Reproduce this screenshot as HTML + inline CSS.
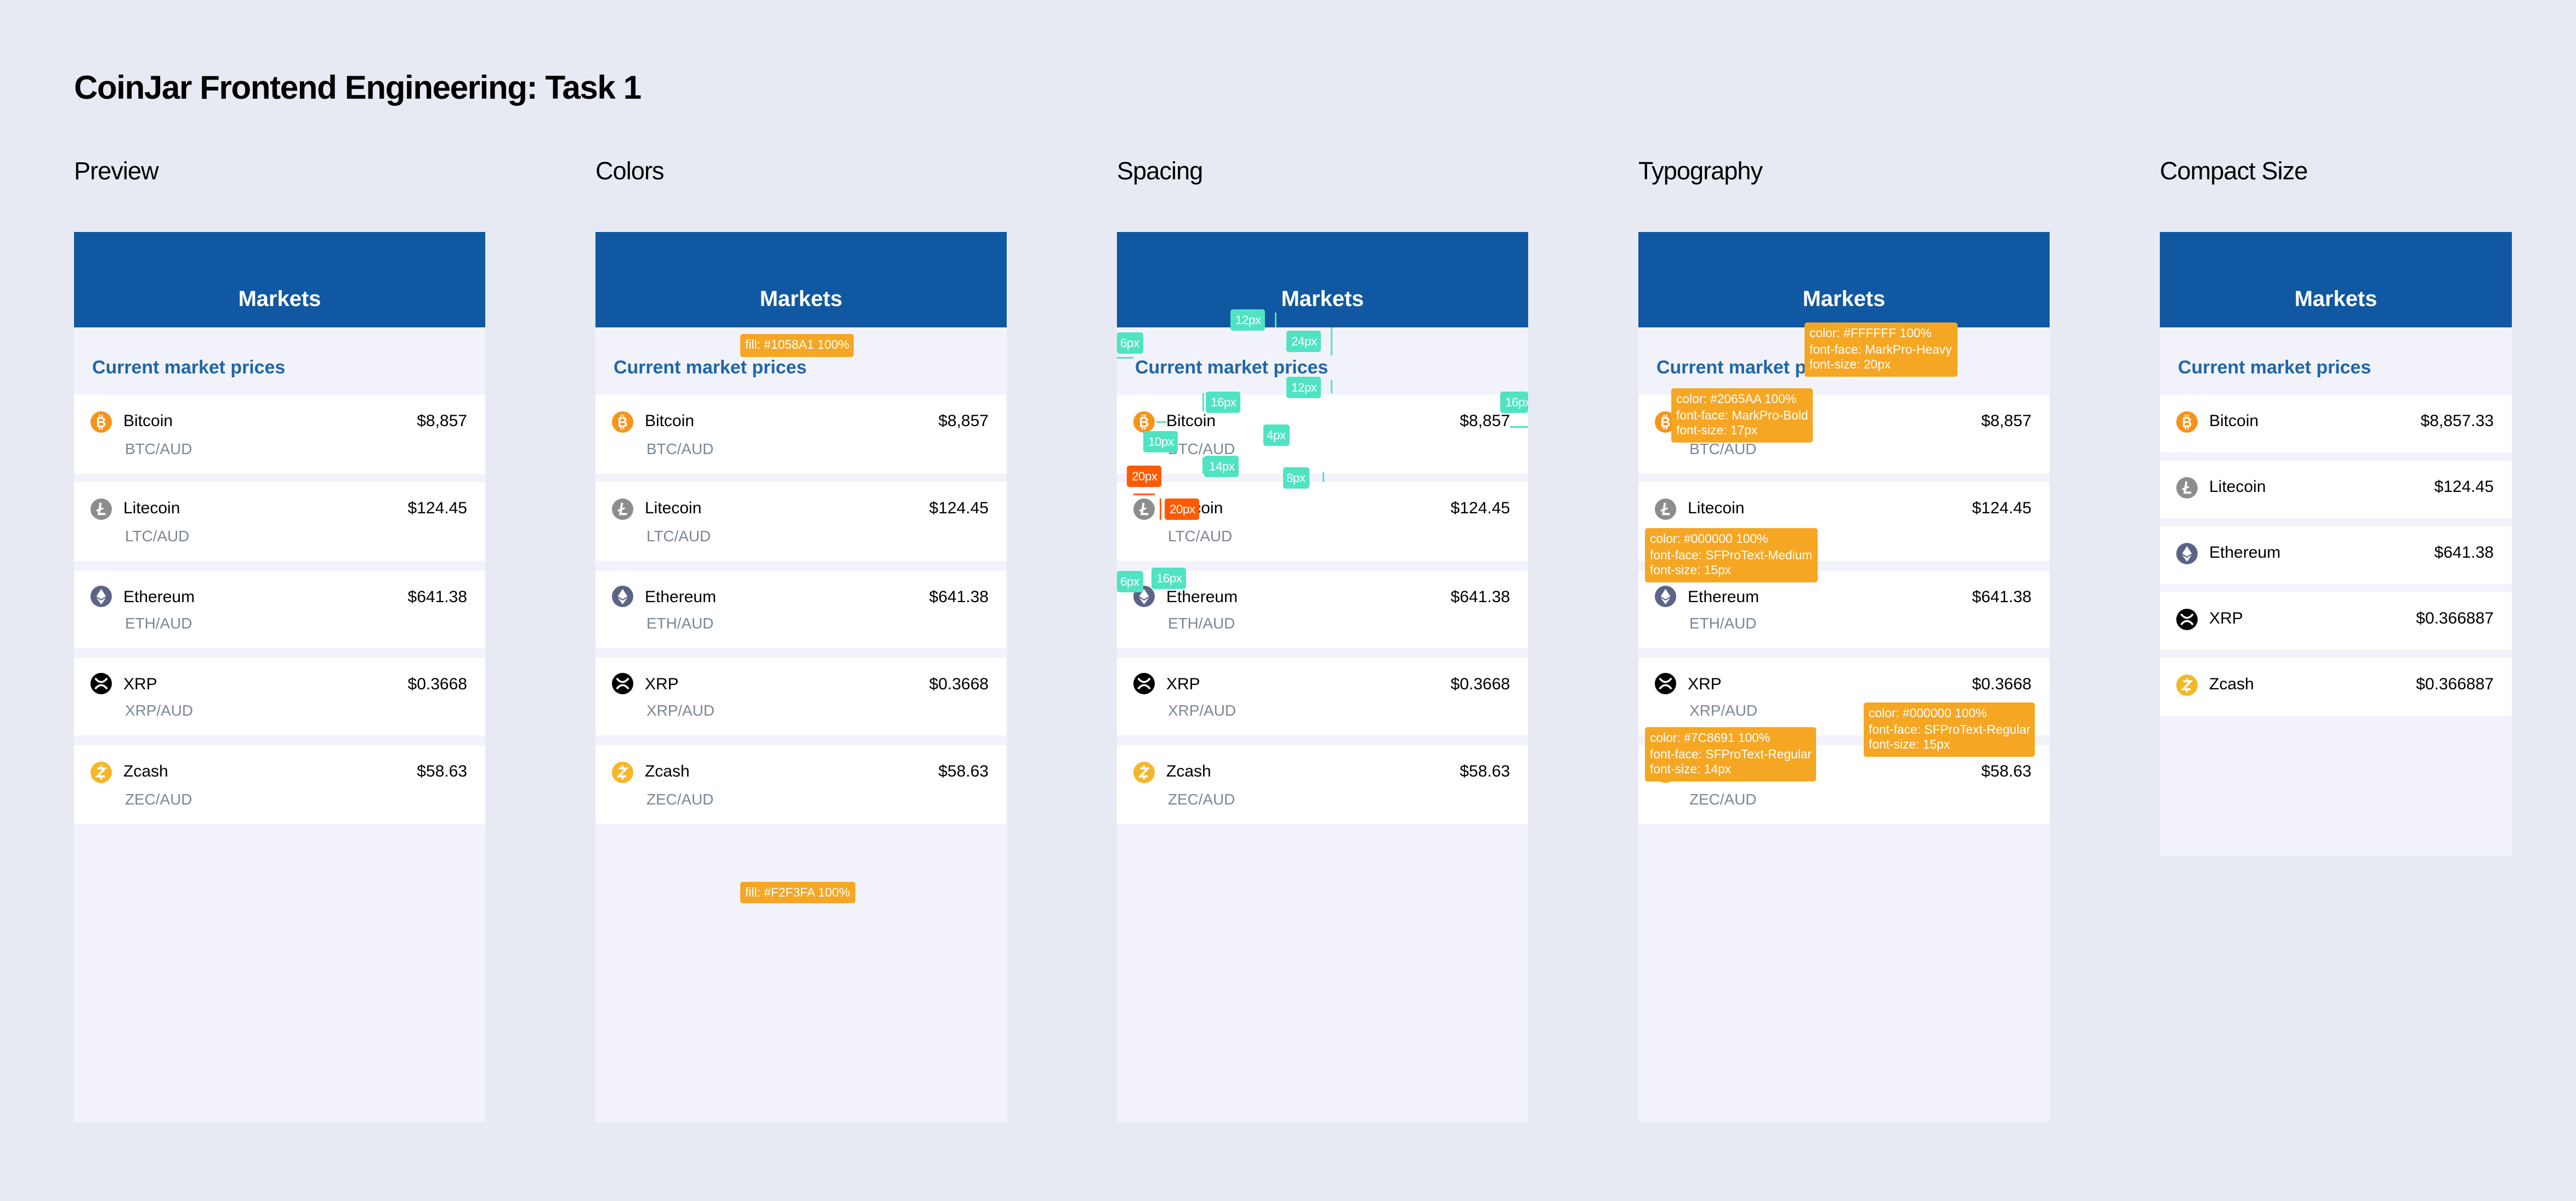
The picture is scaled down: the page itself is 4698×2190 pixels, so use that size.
<!DOCTYPE html>
<html><head><meta charset="utf-8"><style>
html,body{margin:0;padding:0;background:#E8EAF3;}
body{width:4698px;height:2188px;overflow:hidden;position:relative;}
#w{position:absolute;left:0;top:0;width:1566px;height:730px;transform:scale(3);transform-origin:0 0;font-family:"Liberation Sans",sans-serif;}
.h1{position:absolute;left:45px;top:43px;font-size:20px;font-weight:bold;letter-spacing:-0.45px;color:#000;}
.lab{position:absolute;top:96px;font-size:15px;color:#000;letter-spacing:-0.3px;}
.p{position:absolute;top:141px;width:250px;height:541px;background:#F2F3FA;}
.hd{position:absolute;left:0;top:0;right:0;height:58px;background:#1058A1;color:#fff;font-weight:bold;font-size:13.3px;text-align:center;line-height:13px;}
.hd span{position:absolute;left:0;right:0;top:34px;}
.st{position:absolute;left:11px;top:77px;font-size:11.3px;font-weight:bold;color:#2065AA;}
.r{position:absolute;left:0;right:0;height:47.5px;background:#fff;}
.r svg{position:absolute;left:10px;top:9.5px;width:13px;height:13px;}
.n{position:absolute;left:30px;top:11px;font-size:10px;color:#000;line-height:12px;}
.s{position:absolute;left:31px;top:26.5px;font-size:9.3px;color:#7C8691;line-height:12px;}
.v{position:absolute;right:11px;top:11px;font-size:10px;color:#000;line-height:12px;}
.c .r{height:34.7px;}
.t{position:absolute;background:#50E3C2;color:#fff;font-size:7.5px;line-height:13px;height:13px;padding:0 3px;border-radius:1.5px;letter-spacing:-0.2px;}
.o{background:#FF5A00;}
.y{position:absolute;background:#F5A623;color:#fff;font-size:7.6px;line-height:9.5px;padding:2px 3px;border-radius:1.5px;white-space:nowrap;}
.m{position:absolute;background:#50E3C2;}
</style></head><body><div id="w">
<div class="h1">CoinJar Frontend Engineering: Task 1</div>
<div class="lab" style="left:45px">Preview</div>
<div class="lab" style="left:362px">Colors</div>
<div class="lab" style="left:679px">Spacing</div>
<div class="lab" style="left:996px">Typography</div>
<div class="lab" style="left:1313px">Compact Size</div>

<svg width="0" height="0" style="position:absolute"><defs>
<symbol id="btc" viewBox="0 0 20 20"><circle cx="10" cy="10" r="10" fill="#F7931A"/><text x="10" y="14.6" font-size="13" font-weight="bold" fill="#fff" text-anchor="middle" font-family="Liberation Sans">B</text><rect x="8" y="3" width="1.2" height="2.5" fill="#fff"/><rect x="10.3" y="3" width="1.2" height="2.5" fill="#fff"/><rect x="8" y="14.5" width="1.2" height="2.5" fill="#fff"/><rect x="10.3" y="14.5" width="1.2" height="2.5" fill="#fff"/></symbol>
<symbol id="ltc" viewBox="0 0 20 20"><circle cx="10" cy="10" r="10" fill="#8D8D8D"/><path d="M9.5 4 L7.8 14.5 H14" stroke="#fff" stroke-width="2" fill="none"/><path d="M5.5 11.5 L12 9" stroke="#fff" stroke-width="1.6"/></symbol>
<symbol id="eth" viewBox="0 0 20 20"><circle cx="10" cy="10" r="10" fill="#5C6486"/><path d="M10 3 L14.5 10 L10 12.6 L5.5 10Z" fill="#fff"/><path d="M5.5 11.3 L10 13.9 L14.5 11.3 L10 17.5Z" fill="#fff"/></symbol>
<symbol id="xrp" viewBox="0 0 20 20"><circle cx="10" cy="10" r="10" fill="#000"/><path d="M4.5 5 Q7 8.5 10 8.5 Q13 8.5 15.5 5 M4.5 15 Q7 11.5 10 11.5 Q13 11.5 15.5 15" stroke="#fff" stroke-width="1.8" fill="none"/></symbol>
<symbol id="zec" viewBox="0 0 20 20"><circle cx="10" cy="10" r="10" fill="#F4B728"/><path d="M6.5 6.3 H13.5 L6.5 13.7 H13.5" stroke="#fff" stroke-width="1.9" fill="none"/><path d="M10 3.5V6.3M10 13.7V16.5" stroke="#fff" stroke-width="1.6"/></symbol>
</defs></svg>

<div class="p" style="left:45px">
<div class="hd"><span>Markets</span></div><div class="st">Current market prices</div>
<div class="r" style="top:99px"><svg><use href="#btc"/></svg><div class="n">Bitcoin</div><div class="s">BTC/AUD</div><div class="v">$8,857</div></div>
<div class="r" style="top:152.3px"><svg><use href="#ltc"/></svg><div class="n">Litecoin</div><div class="s">LTC/AUD</div><div class="v">$124.45</div></div>
<div class="r" style="top:205.6px"><svg><use href="#eth"/></svg><div class="n">Ethereum</div><div class="s">ETH/AUD</div><div class="v">$641.38</div></div>
<div class="r" style="top:258.9px"><svg><use href="#xrp"/></svg><div class="n">XRP</div><div class="s">XRP/AUD</div><div class="v">$0.3668</div></div>
<div class="r" style="top:312.2px"><svg><use href="#zec"/></svg><div class="n">Zcash</div><div class="s">ZEC/AUD</div><div class="v">$58.63</div></div>
</div>

<div class="p" style="left:362px">
<div class="hd"><span>Markets</span></div><div class="st">Current market prices</div>
<div class="r" style="top:99px"><svg><use href="#btc"/></svg><div class="n">Bitcoin</div><div class="s">BTC/AUD</div><div class="v">$8,857</div></div>
<div class="r" style="top:152.3px"><svg><use href="#ltc"/></svg><div class="n">Litecoin</div><div class="s">LTC/AUD</div><div class="v">$124.45</div></div>
<div class="r" style="top:205.6px"><svg><use href="#eth"/></svg><div class="n">Ethereum</div><div class="s">ETH/AUD</div><div class="v">$641.38</div></div>
<div class="r" style="top:258.9px"><svg><use href="#xrp"/></svg><div class="n">XRP</div><div class="s">XRP/AUD</div><div class="v">$0.3668</div></div>
<div class="r" style="top:312.2px"><svg><use href="#zec"/></svg><div class="n">Zcash</div><div class="s">ZEC/AUD</div><div class="v">$58.63</div></div>
<div class="y" style="left:88px;top:62px;padding:0 3px;line-height:14.4px;">fill: #1058A1 100%</div>
<div class="y" style="left:88px;top:394.5px;padding:0 3px;line-height:13.5px;">fill: #F2F3FA 100%</div>
</div>

<div class="p" style="left:679px">
<div class="hd"><span>Markets</span></div><div class="st">Current market prices</div>
<div class="r" style="top:99px"><svg><use href="#btc"/></svg><div class="n">Bitcoin</div><div class="s">BTC/AUD</div><div class="v">$8,857</div></div>
<div class="r" style="top:152.3px"><svg><use href="#ltc"/></svg><div class="n">Litecoin</div><div class="s">LTC/AUD</div><div class="v">$124.45</div></div>
<div class="r" style="top:205.6px"><svg><use href="#eth"/></svg><div class="n">Ethereum</div><div class="s">ETH/AUD</div><div class="v">$641.38</div></div>
<div class="r" style="top:258.9px"><svg><use href="#xrp"/></svg><div class="n">XRP</div><div class="s">XRP/AUD</div><div class="v">$0.3668</div></div>
<div class="r" style="top:312.2px"><svg><use href="#zec"/></svg><div class="n">Zcash</div><div class="s">ZEC/AUD</div><div class="v">$58.63</div></div>
<div class="t" style="left:69px;top:47px">12px</div><div class="m" style="left:96px;top:49px;width:1px;height:9px"></div>
<div class="t" style="left:103px;top:59.5px">24px</div><div class="m" style="left:130px;top:58px;width:1px;height:17px"></div>
<div class="t" style="left:0;top:61px;padding:0 2px">6px</div><div class="m" style="left:0;top:76px;width:10px;height:1px"></div>
<div class="t" style="left:103px;top:88px">12px</div><div class="m" style="left:130px;top:90px;width:1px;height:8px"></div>
<div class="t" style="left:54px;top:97px">16px</div><div class="m" style="left:52px;top:98px;width:1px;height:11px"></div>
<div class="t" style="left:233px;top:97px;width:11px;overflow:hidden">16px</div><div class="m" style="left:239px;top:118px;width:11px;height:1px"></div>
<div class="t" style="left:16px;top:121px">10px</div><div class="m" style="left:24px;top:115px;width:6px;height:1px"></div>
<div class="t" style="left:89px;top:117px;padding:0 2px">4px</div>
<div class="t" style="left:53px;top:135.5px">14px</div><div class="m" style="left:52px;top:137px;width:1px;height:10px"></div>
<div class="t o" style="left:6px;top:142px">20px</div><div class="m" style="left:10px;top:159px;width:13px;height:1px;background:#FF5A00"></div>
<div class="t" style="left:101px;top:142.5px;padding:0 2px">8px</div><div class="m" style="left:125px;top:146px;width:1px;height:6px"></div>
<div class="t o" style="left:29px;top:162px">20px</div><div class="m" style="left:26px;top:162px;width:1px;height:13px;background:#FF5A00"></div>
<div class="t" style="left:0;top:206px;padding:0 2px">6px</div>
<div class="t" style="left:21px;top:203.5px">16px</div>
</div>

<div class="p" style="left:996px">
<div class="hd"><span>Markets</span></div><div class="st">Current market prices</div>
<div class="r" style="top:99px"><svg><use href="#btc"/></svg><div class="n">Bitcoin</div><div class="s">BTC/AUD</div><div class="v">$8,857</div></div>
<div class="r" style="top:152.3px"><svg><use href="#ltc"/></svg><div class="n">Litecoin</div><div class="s">LTC/AUD</div><div class="v">$124.45</div></div>
<div class="r" style="top:205.6px"><svg><use href="#eth"/></svg><div class="n">Ethereum</div><div class="s">ETH/AUD</div><div class="v">$641.38</div></div>
<div class="r" style="top:258.9px"><svg><use href="#xrp"/></svg><div class="n">XRP</div><div class="s">XRP/AUD</div><div class="v">$0.3668</div></div>
<div class="r" style="top:312.2px"><svg><use href="#zec"/></svg><div class="n">Zcash</div><div class="s">ZEC/AUD</div><div class="v">$58.63</div></div>
<div class="y" style="left:101px;top:55px">color: #FFFFFF 100%<br>font-face: MarkPro-Heavy<br>font-size: 20px</div>
<div class="y" style="left:20px;top:95px">color: #2065AA 100%<br>font-face: MarkPro-Bold<br>font-size: 17px</div>
<div class="y" style="left:4px;top:180px">color: #000000 100%<br>font-face: SFProText-Medium<br>font-size: 15px</div>
<div class="y" style="left:4px;top:301px">color: #7C8691 100%<br>font-face: SFProText-Regular<br>font-size: 14px</div>
<div class="y" style="left:137px;top:286px">color: #000000 100%<br>font-face: SFProText-Regular<br>font-size: 15px</div>
</div>

<div class="p c" style="left:1313px;width:214px;height:379px">
<div class="hd"><span>Markets</span></div><div class="st">Current market prices</div>
<div class="r" style="top:99px"><svg><use href="#btc"/></svg><div class="n">Bitcoin</div><div class="v">$8,857.33</div></div>
<div class="r" style="top:139px"><svg><use href="#ltc"/></svg><div class="n">Litecoin</div><div class="v">$124.45</div></div>
<div class="r" style="top:179px"><svg><use href="#eth"/></svg><div class="n">Ethereum</div><div class="v">$641.38</div></div>
<div class="r" style="top:219px"><svg><use href="#xrp"/></svg><div class="n">XRP</div><div class="v">$0.366887</div></div>
<div class="r" style="top:259px"><svg><use href="#zec"/></svg><div class="n">Zcash</div><div class="v">$0.366887</div></div>
</div>
</div></body></html>
